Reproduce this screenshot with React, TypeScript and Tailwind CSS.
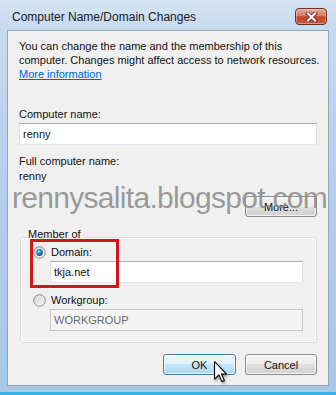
import { ReactNode } from "react";

const FONT = "font-['Liberation_Sans',Arial,sans-serif]";

const CloseButton = () => (
  <div className="mt-[8px] flex h-[17px] w-[32px] items-center justify-center rounded-[4px] border border-[#6e2e22] bg-[linear-gradient(#e6a795_0%,#d67b63_45%,#c4472b_52%,#cc5a3b_100%)] shadow-[inset_0_0_0_1px_rgba(255,255,255,0.35)]">
    <svg width="13" height="10" viewBox="0 0 13 10">
      <path d="M3 1.5 L10 8.5 M10 1.5 L3 8.5" stroke="#5a1d12" strokeWidth="3.8" strokeLinecap="square" />
      <path d="M3 1.5 L10 8.5 M10 1.5 L3 8.5" stroke="#ffffff" strokeWidth="2.2" strokeLinecap="square" />
    </svg>
  </div>
);

const Radio = ({ checked }: { checked: boolean }) => (
  <svg width="13" height="13" viewBox="0 0 13 13" className="shrink-0">
    <defs>
      <linearGradient id={checked ? "ringOn" : "ringOff"} x1="0" y1="0" x2="1" y2="1">
        <stop offset="0" stopColor="#d2d2d2" />
        <stop offset="1" stopColor="#fbfbfb" />
      </linearGradient>
      <radialGradient id="dot" cx="0.4" cy="0.35" r="0.7">
        <stop offset="0" stopColor="#8fd6f2" />
        <stop offset="0.5" stopColor="#2f86b4" />
        <stop offset="1" stopColor="#123f58" />
      </radialGradient>
    </defs>
    <circle cx="6.5" cy="6.5" r="5.8" fill={`url(#${checked ? "ringOn" : "ringOff"})`} stroke="#8b8b8b" strokeWidth="1" />
    {checked && <circle cx="6.5" cy="6.5" r="3.4" fill="url(#dot)" />}
  </svg>
);

const WinButton = ({ label, hot = false, width }: { label: string; hot?: boolean; width: string }) => (
  <div
    className={`flex h-[21px] ${width} items-center justify-center rounded-[3px] border text-[11px] text-[#111] shadow-[inset_0_0_0_1px_rgba(255,255,255,0.75)] ${
      hot
        ? "border-[#3c7fb1] bg-[linear-gradient(#ecf7fd_0%,#dcf1fc_50%,#c1e6fb_50%,#a9daf6_100%)]"
        : "border-[#8a8a8a] bg-[linear-gradient(#f4f4f4_0%,#ececec_50%,#dfdfdf_50%,#d2d2d2_100%)]"
    }`}
  >
    {label}
  </div>
);

const TextBox = ({ children, disabled = false, className = "" }: { children: ReactNode; disabled?: boolean; className?: string }) => (
  <div
    className={`flex h-[22px] items-center border pl-[3px] ${
      disabled
        ? "border-[#c4c4c4] bg-[#f4f4f4] text-[#6d6d6d]"
        : "border-[#abadb3] border-x-[#dbdfe6] border-b-[#e3e9ef] bg-white text-[#111]"
    } ${className}`}
  >
    {children}
  </div>
);

const Cursor = () => (
  <svg
    width="13"
    height="22"
    viewBox="0 0 12 20"
    className="absolute left-[214px] top-[361px] drop-shadow-[1px_2px_1px_rgba(0,0,0,0.35)]"
  >
    <path d="M0.5 0.5 L0.5 16.5 L4.5 12.7 L7.3 18.8 L9.6 17.8 L6.9 11.8 L11.5 11.8 Z" fill="#fff" stroke="#000" strokeWidth="1" strokeLinejoin="round" />
  </svg>
);

export default function App() {
  return (
    <div className={`relative flex h-[395px] w-[336px] flex-col overflow-hidden bg-[linear-gradient(180deg,#d5e4f3_0px,#c6daef_30px,#b5cee9_200px,#aac7e6_380px)] ${FONT}`}>
      {/* title bar */}
      <div className="flex h-[30px] shrink-0 items-start justify-between pl-[12px] pr-[9px]">
        <span className="mt-[10px] text-[12px] leading-[14px] text-[#1a1a1a]">Computer Name/Domain Changes</span>
        <CloseButton />
      </div>

      {/* client area */}
      <div className="mx-[7px] flex flex-1 flex-col border border-[#8fa6c0] bg-[#f0f0f0] px-[11px] pt-[8px] text-[11px] leading-[14px] text-[#111]">
        <p className="whitespace-nowrap">
          You can change the name and the membership of this
          <br />
          computer. Changes might affect access to network resources.
          <br />
          <a className="text-[#0066cc] underline">More information</a>
        </p>

        <div className="mt-[26px]">Computer name:</div>
        <TextBox className="mt-[2px]">renny</TextBox>

        <div className="mt-[9px]">Full computer name:</div>
        <div className="mt-[1px]">renny</div>

        <div className="mt-[13px] flex justify-end">
          <WinButton label="More..." width="w-[72px]" />
        </div>

        <div className="relative ml-[1px] mt-[20px] rounded-[3px] border border-[#d5dfe5] pb-[11px] pl-[12px] pt-[7px] shadow-[inset_0_0_0_1px_#fff]">
          <span className="absolute -top-[11px] left-[6px] bg-[#f0f0f0] px-[1px]">Member of</span>
          <div className="flex h-[14px] items-center gap-[5px]">
            <Radio checked />
            <span>Domain:</span>
          </div>
          <TextBox className="ml-[17px] mt-[2px] w-[253px]">tkja.net</TextBox>
          <div className="mt-[10px] flex h-[14px] items-center gap-[5px]">
            <Radio checked={false} />
            <span>Workgroup:</span>
          </div>
          <TextBox disabled className="ml-[17px] mt-[2px] w-[253px]">WORKGROUP</TextBox>
        </div>

        <div className="mt-[11px] flex justify-end gap-[9px]">
          <WinButton label="OK" hot width="w-[73px]" />
          <WinButton label="Cancel" width="w-[72px]" />
        </div>
      </div>

      {/* bottom frame */}
      <div className="h-[9px] shrink-0 border-b-[3px] border-[#38b2e6]" />

      {/* watermark */}
      <span className="absolute left-[12px] top-[183px] whitespace-nowrap text-[30px] leading-[30px] tracking-[-0.7px] text-[#8a8a8a]/85">
        rennysalita.blogspot.com
      </span>

      {/* highlight */}
      <div className="absolute left-[30px] top-[239px] h-[49px] w-[89px] border-[3px] border-[#d3141c]" />

      <Cursor />
    </div>
  );
}
